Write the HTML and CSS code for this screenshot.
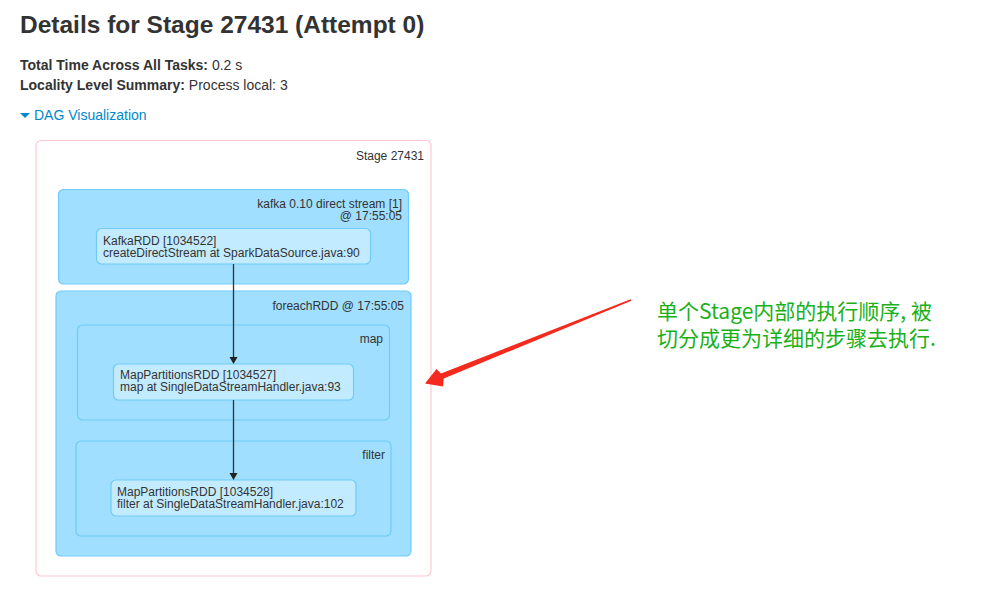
FILE: index.html
```html
<!DOCTYPE html>
<html>
<head>
<meta charset="utf-8">
<link rel="stylesheet" href="styles.css">
</head>
<body>
<div class="page">
  <h3 class="title">Details for Stage 27431 (Attempt 0)</h3>
  <ul class="summary">
    <li><strong>Total Time Across All Tasks:</strong> 0.2 s</li>
    <li><strong>Locality Level Summary:</strong> Process local: 3</li>
  </ul>
  <a class="dag-toggle" href="#"><span class="caret"></span>DAG Visualization</a>
  <div class="dag-row">
    <svg class="dag" width="420" height="450" viewBox="30 135 420 450">
      <rect class="stage" x="36" y="140.5" width="395" height="435.5" rx="5" ry="5"/>
      <text class="lbl" x="424" y="160" text-anchor="end">Stage 27431</text>

      <rect class="cluster" x="58.5" y="189.5" width="350" height="94.5" rx="5" ry="5"/>
      <text class="lbl" x="402" y="208" text-anchor="end">kafka 0.10 direct stream [1]</text>
      <text class="lbl" x="402" y="220" text-anchor="end">@ 17:55:05</text>
      <rect class="node" x="96.5" y="228.5" width="274" height="35.5" rx="5" ry="5"/>
      <text class="lbl" x="103" y="245">KafkaRDD [1034522]</text>
      <text class="lbl" x="103" y="257">createDirectStream at SparkDataSource.java:90</text>

      <rect class="cluster" x="56" y="291" width="355" height="265" rx="5" ry="5"/>
      <text class="lbl" x="404" y="310" text-anchor="end">foreachRDD @ 17:55:05</text>

      <rect class="cluster" x="77.5" y="325" width="312" height="95" rx="5" ry="5"/>
      <text class="lbl" x="383" y="343" text-anchor="end">map</text>
      <rect class="node" x="113.5" y="364" width="240" height="36" rx="5" ry="5"/>
      <text class="lbl" x="120" y="379">MapPartitionsRDD [1034527]</text>
      <text class="lbl" x="120" y="391">map at SingleDataStreamHandler.java:93</text>

      <rect class="cluster" x="76" y="441" width="315" height="95" rx="5" ry="5"/>
      <text class="lbl" x="385" y="459" text-anchor="end">filter</text>
      <rect class="node" x="111" y="480" width="245" height="36" rx="5" ry="5"/>
      <text class="lbl" x="117" y="496">MapPartitionsRDD [1034528]</text>
      <text class="lbl" x="117" y="508">filter at SingleDataStreamHandler.java:102</text>

      <line class="edge" x1="233.5" y1="264" x2="233.5" y2="357"/>
      <polygon class="head" points="229.5,357 237.5,357 233.5,364"/>
      <line class="edge" x1="233.5" y1="400" x2="233.5" y2="473"/>
      <polygon class="head" points="229.5,473 237.5,473 233.5,480"/>
    </svg>
    <p class="note">单个Stage内部的执行顺序, 被<br>切分成更为详细的步骤去执行.</p>
  </div>
</div>
<svg class="pointer" width="990" height="595" viewBox="0 0 990 595">
  <polygon points="630.6,299.3 441,373.6 436.5,369 425,383.5 443,386.5 443.8,378.6 631.4,300.7"/>
</svg>
</body>
</html>
```
FILE: styles.css
```css
html, body {
  margin: 0;
  padding: 0;
  background: #fff;
}
body {
  font-family: "Liberation Sans", Arial, Helvetica, sans-serif;
  font-size: 14px;
  color: #333;
  position: relative;
  width: 990px;
  height: 595px;
  overflow: hidden;
}
.page {
  padding: 9px 20px 0 20px;
}
.title {
  margin: 0;
  font-size: 24.5px;
  line-height: 32px;
  font-weight: bold;
  color: #333;
}
.summary {
  list-style: none;
  margin: 14px 0 0 0;
  padding: 0;
}
.summary li {
  line-height: 20px;
}
.summary strong {
  font-weight: bold;
}
.dag-toggle {
  display: inline-flex;
  align-items: center;
  margin-top: 10px;
  line-height: 20px;
  color: #0088cc;
  text-decoration: none;
}
.caret {
  display: inline-block;
  width: 0;
  height: 0;
  border-left: 5px solid transparent;
  border-right: 5px solid transparent;
  border-top: 5px solid #0088cc;
  margin-right: 4px;
}
.dag-row {
  display: flex;
  align-items: flex-start;
  margin-top: 10px;
  margin-left: 10px;
}
.dag {
  display: block;
  flex: none;
}
.dag .stage {
  fill: #fff;
  stroke: #ffc8d3;
  stroke-width: 1.2;
}
.dag .cluster {
  fill: #a0dfff;
  stroke: #70cbf7;
  stroke-width: 1.2;
}
.dag .node {
  fill: #c3ebff;
  stroke: #70cbf7;
  stroke-width: 1.2;
}
.dag .lbl {
  font-family: "Liberation Sans", Arial, sans-serif;
  font-size: 12px;
  fill: #333;
}
.dag .edge {
  stroke: #333;
  stroke-width: 1.3;
}
.dag .head {
  fill: #222;
}
.note {
  margin: 162px 0 0 207px;
  font-family: "Noto Sans CJK SC", "Noto Sans", sans-serif;
  font-size: 21px;
  line-height: 27px;
  color: #19b019;
  white-space: nowrap;
}
.pointer {
  position: absolute;
  left: 0;
  top: 0;
  pointer-events: none;
}
.pointer polygon {
  fill: #f52a1e;
}
```
